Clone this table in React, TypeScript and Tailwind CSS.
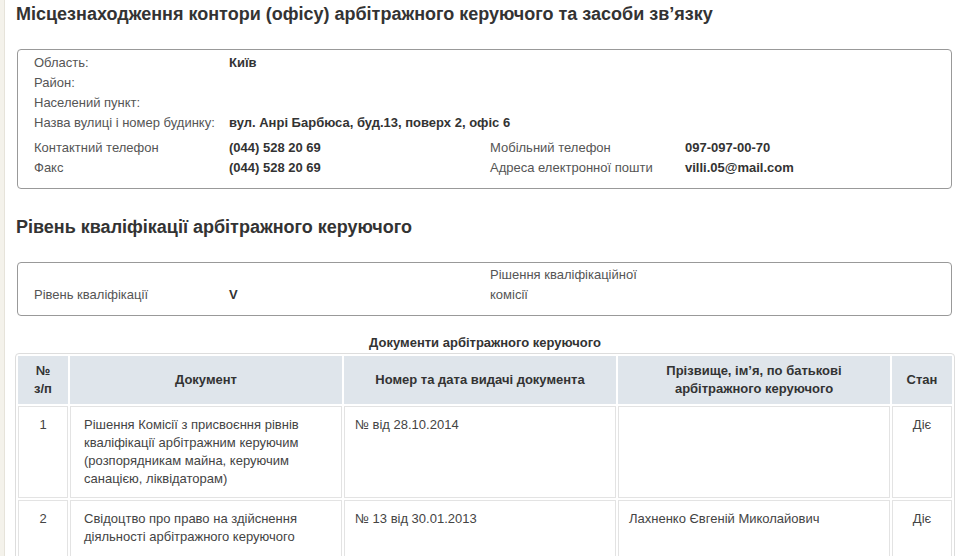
export default function App() {
  const label = "text-[#555]";
  const value = "font-bold text-[#333]";
  return (
    <div className="flex min-h-[556px] bg-white font-['Liberation_Sans',Arial,sans-serif] text-[13px] text-[#333]">
      <div className="w-[5px] shrink-0 border-r border-[#e6e3da] bg-[#f4f2eb]" />
      <div className="flex-1 pl-[10px] pr-[8px] pt-[4px]">
        <h2 className="pl-[1px] text-[18px] font-bold leading-[20px] text-[#333]">
          Місцезнаходження контори (офісу) арбітражного керуючого та засоби зв’язку
        </h2>

        <div className="ml-[2px] mr-[3px] mt-[25px] rounded-[4px] border border-[#999] pb-[10px] pl-[16px] pt-[3px]">
          <div className="grid grid-cols-[195px_1fr] leading-[20px]">
            <div className={label}>Область:</div>
            <div className={value}>Київ</div>
            <div className={label}>Район:</div>
            <div className={value}></div>
            <div className={label}>Населений пункт:</div>
            <div className={value}></div>
            <div className={label}>Назва вулиці і номер будинку:</div>
            <div className={value}>вул. Анрі Барбюса, буд.13, поверх 2, офіс 6</div>
          </div>
          <div className="mt-[5px] grid grid-cols-[195px_261px_195px_1fr] leading-[20px]">
            <div className={label}>Контактний телефон</div>
            <div className={value}>(044) 528 20 69</div>
            <div className={label}>Мобільний телефон</div>
            <div className={value}>097-097-00-70</div>
            <div className={label}>Факс</div>
            <div className={value}>(044) 528 20 69</div>
            <div className={label}>Адреса електронної пошти</div>
            <div className={value}>villi.05@mail.com</div>
          </div>
        </div>

        <h2 className="mt-[28px] pl-[1px] text-[18px] font-bold leading-[20px] text-[#333]">
          Рівень кваліфікації арбітражного керуючого
        </h2>

        <div className="ml-[2px] mr-[3px] mt-[25px] rounded-[4px] border border-[#999] pb-[10px] pl-[16px] pt-[2px]">
          <div className="grid grid-cols-[195px_261px_195px_1fr] items-end leading-[20px]">
            <div className={label}>Рівень кваліфікації</div>
            <div className={value}>V</div>
            <div className={label}>
              Рішення кваліфікаційної
              <br />
              комісії
            </div>
            <div className={value}></div>
          </div>
        </div>

        <div className="mt-[18px] text-center text-[13px] font-bold leading-[18px] text-[#333]">
          Документи арбітражного керуючого
        </div>

        <table className="mt-[1px] w-full table-fixed border-separate border-spacing-[2px] rounded-[4px] border border-[#ddd]">
          <colgroup>
            <col className="w-[50px]" />
            <col className="w-[272px]" />
            <col className="w-[272px]" />
            <col className="w-[272px]" />
            <col />
          </colgroup>
          <thead>
            <tr>
              <th className="bg-[#dfe5eb] py-[6px] text-center align-middle font-bold leading-[18px] text-[#333]">
                №<br />з/п
              </th>
              <th className="bg-[#dfe5eb] py-[6px] text-center align-middle font-bold leading-[18px] text-[#333]">
                Документ
              </th>
              <th className="bg-[#dfe5eb] py-[6px] text-center align-middle font-bold leading-[18px] text-[#333]">
                Номер та дата видачі документа
              </th>
              <th className="bg-[#dfe5eb] py-[6px] text-center align-middle font-bold leading-[18px] text-[#333]">
                Прізвище, ім’я, по батькові
                <br />
                арбітражного керуючого
              </th>
              <th className="bg-[#dfe5eb] py-[6px] text-center align-middle font-bold leading-[18px] text-[#333]">
                Стан
              </th>
            </tr>
          </thead>
          <tbody>
            <tr>
              <td className="border border-[#e3e3e3] px-[10px] py-[9px] text-center align-top leading-[18px] text-[#444]">1</td>
              <td className="border border-[#e3e3e3] py-[9px] pl-[13px] pr-[8px] align-top leading-[18px] text-[#444]">
                Рішення Комісії з присвоєння рівнів
                <br />
                кваліфікації арбітражним керуючим
                <br />
                (розпорядникам майна, керуючим
                <br />
                санацією, ліквідаторам)
              </td>
              <td className="border border-[#e3e3e3] px-[10px] py-[9px] align-top leading-[18px] text-[#444]">№ від 28.10.2014</td>
              <td className="border border-[#e3e3e3] px-[10px] py-[9px] align-top leading-[18px] text-[#444]"></td>
              <td className="border border-[#e3e3e3] px-[6px] py-[9px] text-center align-top leading-[18px] text-[#444]">Діє</td>
            </tr>
            <tr>
              <td className="border border-[#e3e3e3] px-[10px] py-[9px] text-center align-top leading-[18px] text-[#444]">2</td>
              <td className="border border-[#e3e3e3] py-[9px] pl-[13px] pr-[8px] align-top leading-[18px] text-[#444]">
                Свідоцтво про право на здійснення
                <br />
                діяльності арбітражного керуючого
                <br />
                &nbsp;
              </td>
              <td className="border border-[#e3e3e3] px-[10px] py-[9px] align-top leading-[18px] text-[#444]">№ 13 від 30.01.2013</td>
              <td className="border border-[#e3e3e3] px-[10px] py-[9px] align-top leading-[18px] text-[#444]">Лахненко Євгеній Миколайович</td>
              <td className="border border-[#e3e3e3] px-[6px] py-[9px] text-center align-top leading-[18px] text-[#444]">Діє</td>
            </tr>
          </tbody>
        </table>
      </div>
    </div>
  );
}
